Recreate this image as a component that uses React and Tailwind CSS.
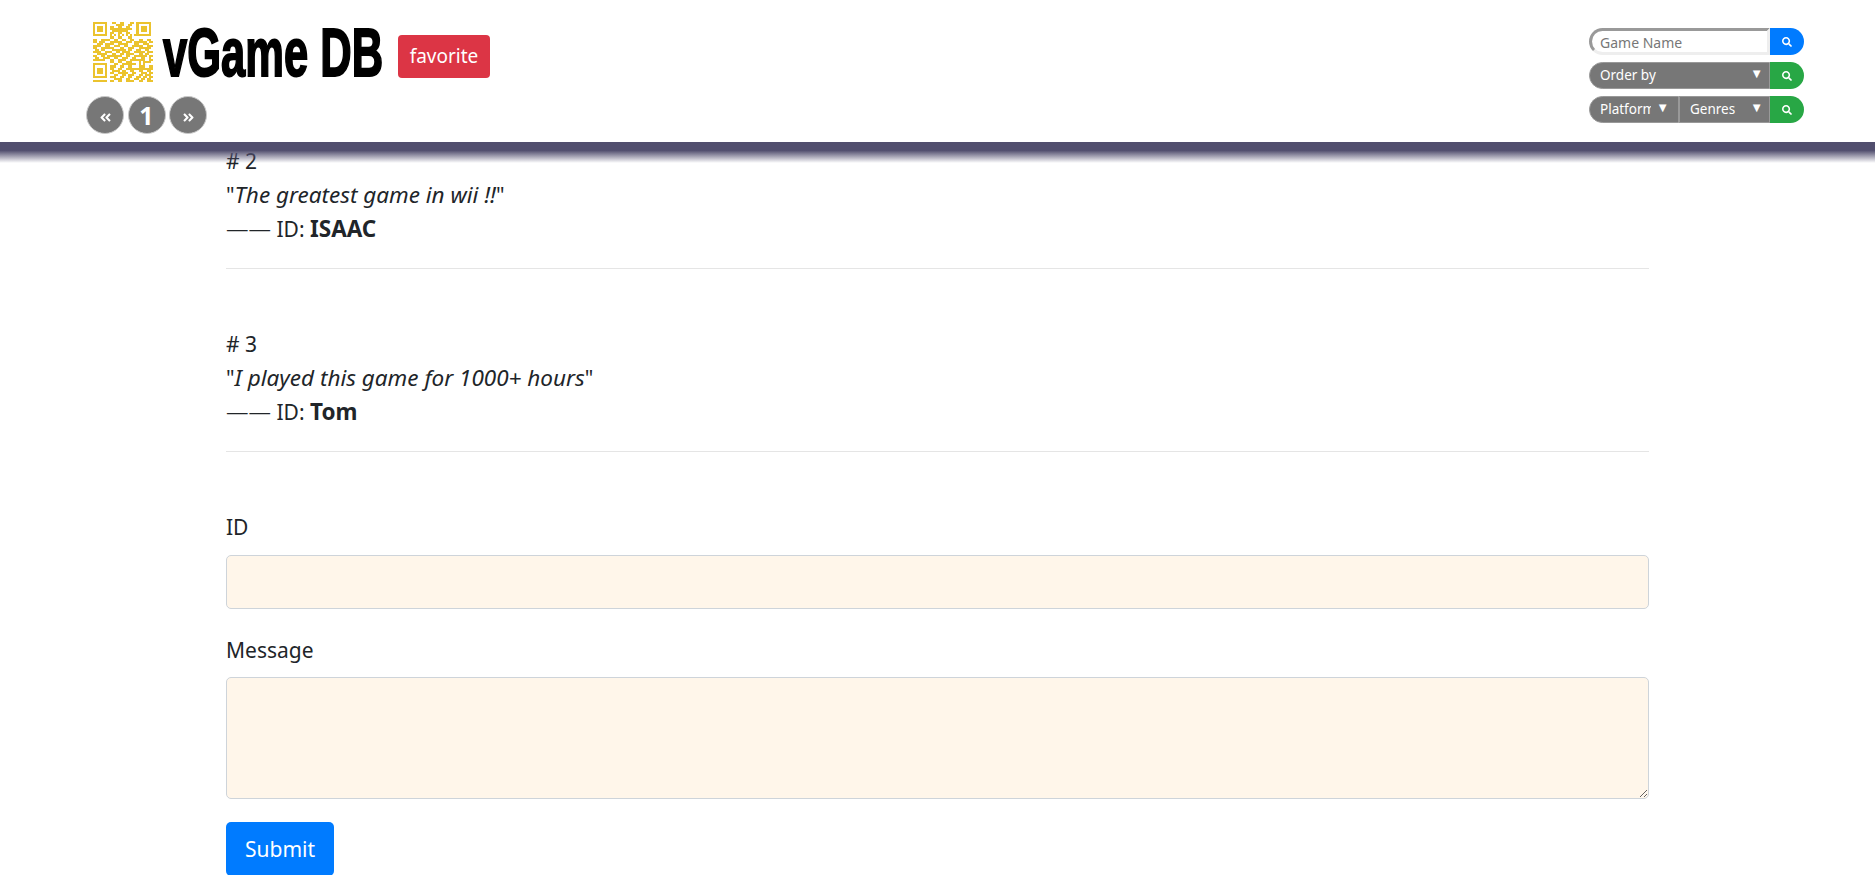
import React from "react";
import { FaAngleDoubleLeft, FaAngleDoubleRight, FaSearch } from "react-icons/fa";

const QR_ROWS = [
  "11111110011001100011011111110",
  "10000010000111100110010000010",
  "10111010110011001100010111010",
  "10111010111111111110010111010",
  "10111010011111111000010111010",
  "10000010110011001100010000010",
  "11111110101010101010111111110",
  "00000000110011000110000000000",
  "11001111001100110011001100110",
  "11011100111111001110111111011",
  "00111011110011111000110011100",
  "11110011001110011001111100111",
  "11001111110001100111001111110",
  "01101100011111110110011001100",
  "11110011100110111100111110111",
  "00111110011001101111001101100",
  "11001101111111001100111111011",
  "01100111001100111001100110010",
  "11111100110011110011111110011",
  "00000000110011001110001011110",
  "11111110001100111111101010000",
  "10000010111001100110001110011",
  "10111010110011001111111111111",
  "10111010011110110011001100110",
  "10111010110011111001100111011",
  "10000010001100110111001101110",
  "11111110111001100110011011011",
  "00000000001111001100110110110",
  "11111110110011001111001100111",
];

function QrLogo() {
  return (
    <svg viewBox="0 0 29 29" className="h-[60px] w-[60px]" shapeRendering="crispEdges">
      {QR_ROWS.map((row, y) =>
        row.split("").map((cell, x) =>
          cell === "1" ? <rect key={`${x}-${y}`} x={x} y={y} width="1" height="1" fill="#ebc32e" /> : null
        )
      )}
    </svg>
  );
}

function PageCircle({ children }) {
  return (
    <div className="flex h-[38px] w-[38px] items-center justify-center rounded-full border border-[#c8c8c8] bg-[#777] text-white">
      {children}
    </div>
  );
}

function SearchBtn({ color }) {
  return (
    <button className={`flex h-full w-[34px] items-center justify-center rounded-r-full text-white ${color}`}>
      <FaSearch size={10} />
    </button>
  );
}

function Arrow({ right = "right-[6px]" }) {
  return <span className={`absolute top-[2px] text-[13px] leading-[16px] text-white ${right}`}>▼</span>;
}

function Comment({ num, text, id }) {
  return (
    <div>
      <div className="h-[34px]"># {num}</div>
      <div className="h-[34px]">
        "<em className="text-[22.5px]">{text}</em>"
      </div>
      <div className="h-[34px]">
        <span className="text-[22.5px] font-light">——</span> ID: <strong className="text-[22.5px]">{id}</strong>
      </div>
      <hr className="mt-[22px] border-[#e5e5e5]" />
    </div>
  );
}

export default function App() {
  return (
    <div className="relative h-[875px] overflow-hidden bg-white font-['Noto_Sans',sans-serif] text-[#212529]">
      {/* header */}
      <div className="flex h-[142px] justify-between pl-[86px] pr-[71px]">
        <div>
          <div className="flex h-[96px] items-start pl-[7px] pt-[22px]">
            <QrLogo />
            <h1 className="ml-[10px] mt-[-4px] w-[220px] origin-left scale-x-[0.64] whitespace-nowrap font-['Liberation_Sans',sans-serif] text-[68px] font-bold leading-[68px] text-black [-webkit-text-stroke:2px_black]">
              vGame DB
            </h1>
            <button className="ml-[15px] mt-[13px] h-[43px] w-[92px] rounded-[4px] bg-[#dc3545] text-[19px] text-white">
              favorite
            </button>
          </div>
          <div className="flex gap-[3.5px]">
            <PageCircle>
              <FaAngleDoubleLeft size={13} className="mt-[5px]" />
            </PageCircle>
            <PageCircle>
              <span className="text-[25px] font-bold leading-none">1</span>
            </PageCircle>
            <PageCircle>
              <FaAngleDoubleRight size={13} className="mt-[5px]" />
            </PageCircle>
          </div>
        </div>

        <div className="flex w-[215px] flex-col gap-[7px] pt-[28px] text-[13.5px] text-white">
          <div className="flex h-[27px]">
            <input
              placeholder="Game Name"
              className="h-full min-w-0 flex-1 rounded-l-full border-[3px] border-b-[#eee] border-l-[#999] border-r-[#eee] border-t-[#999] bg-white pl-[8px] pt-[2px] text-[14px] text-[#555] outline-none placeholder:text-[#777]"
            />
            <SearchBtn color="bg-[#007bff]" />
          </div>
          <div className="flex h-[27px]">
            <div className="relative flex flex-1 items-center rounded-l-full border border-[#999] bg-[#777] pl-[10px]">
              Order by
              <Arrow />
            </div>
            <SearchBtn color="bg-[#28a745]" />
          </div>
          <div className="flex h-[27px]">
            <div className="relative flex w-[90px] items-center overflow-hidden rounded-l-full border border-[#999] bg-[#777] pl-[10px]">
              <span className="w-[51px] overflow-hidden">Platform</span>
              <Arrow right="right-[9px]" />
            </div>
            <div className="relative flex flex-1 items-center border border-[#999] bg-[#777] pl-[10px]">
              Genres
              <Arrow />
            </div>
            <SearchBtn color="bg-[#28a745]" />
          </div>
        </div>
      </div>

      {/* shadow bar over the content */}
      <div className="absolute left-0 right-0 top-[142px] z-10 h-[21px] bg-gradient-to-b from-[#514e6e] from-40% to-transparent" />

      {/* comments and form */}
      <div className="mx-auto w-[1423px] text-[21px] leading-[34px]">
        <div className="pt-[2px]">
          <Comment num="2" text="The greatest game in wii !!" id="ISAAC" />
        </div>
        <div className="mt-[58px]">
          <Comment num="3" text="I played this game for 1000+ hours" id="Tom" />
        </div>

        <form className="mt-[58px]">
          <label className="block">ID</label>
          <input className="mt-[11px] block h-[54px] w-full rounded-[5px] border border-[#ced4da] bg-[#fff6ea] outline-none" />
          <label className="mt-[24px] block">Message</label>
          <textarea className="mt-[10px] block h-[122px] w-full rounded-[5px] border border-[#ced4da] bg-[#fff6ea] outline-none" />
          <button type="button" className="mt-[23px] h-[54px] w-[108px] rounded-[5px] bg-[#007bff] text-white">
            Submit
          </button>
        </form>
      </div>
    </div>
  );
}
